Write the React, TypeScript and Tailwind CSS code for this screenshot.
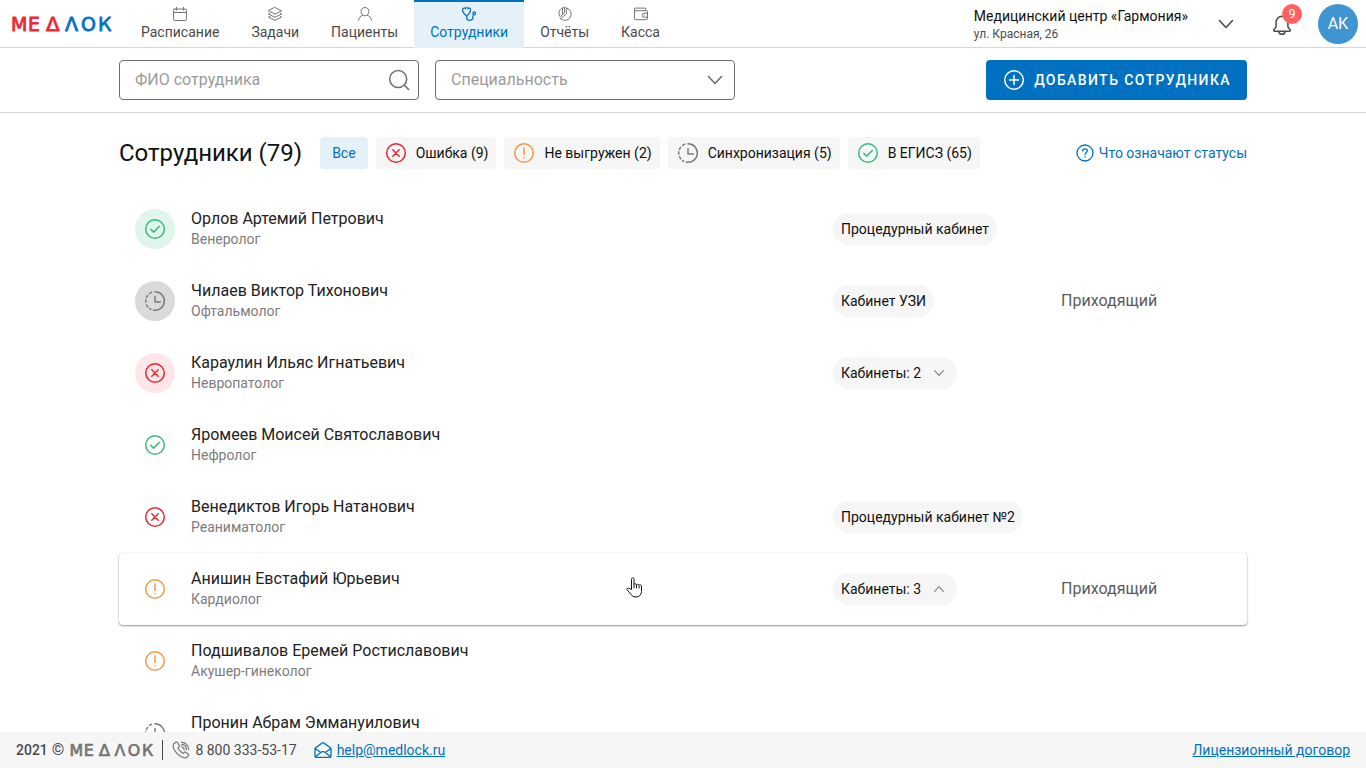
import type { ReactNode } from 'react';

type Status = 'ok' | 'sync' | 'error' | 'warning';

interface Employee {
  name: string;
  specialty: string;
  status: Status;
  filled?: boolean;
  room?: string;
  rooms?: number;
  expanded?: boolean;
  visiting?: boolean;
}

const employees: Employee[] = [
  { name: 'Орлов Артемий Петрович', specialty: 'Венеролог', status: 'ok', filled: true, room: 'Процедурный кабинет' },
  { name: 'Чилаев Виктор Тихонович', specialty: 'Офтальмолог', status: 'sync', filled: true, room: 'Кабинет УЗИ', visiting: true },
  { name: 'Караулин Ильяс Игнатьевич', specialty: 'Невропатолог', status: 'error', filled: true, rooms: 2 },
  { name: 'Яромеев Моисей Святославович', specialty: 'Нефролог', status: 'ok' },
  { name: 'Венедиктов Игорь Натанович', specialty: 'Реаниматолог', status: 'error', room: 'Процедурный кабинет №2' },
  { name: 'Анишин Евстафий Юрьевич', specialty: 'Кардиолог', status: 'warning', rooms: 3, expanded: true, visiting: true },
  { name: 'Подшивалов Еремей Ростиславович', specialty: 'Акушер-гинеколог', status: 'warning' },
  { name: 'Пронин Абрам Эммануилович', specialty: '', status: 'sync' },
];

const filters: { label: string; status: Status }[] = [
  { label: 'Ошибка (9)', status: 'error' },
  { label: 'Не выгружен (2)', status: 'warning' },
  { label: 'Синхронизация (5)', status: 'sync' },
  { label: 'В ЕГИСЗ (65)', status: 'ok' },
];

const statusColor: Record<Status, string> = {
  ok: 'text-[#3dba7e]',
  sync: 'text-[#7c7c7c]',
  error: 'text-[#ee2630]',
  warning: 'text-[#f2994a]',
};

const statusBg: Record<Status, string> = {
  ok: 'bg-[#e0f5ec]',
  sync: 'bg-[#dadada]',
  error: 'bg-[#fde6e8]',
  warning: 'bg-[#fdf0e4]',
};

interface IconProps {
  children: ReactNode;
  size?: string;
  box?: number;
  width?: number;
}

function Icon({ children, size = 'size-4', box = 16, width = 1 }: IconProps) {
  return (
    <svg viewBox={`0 0 ${box} ${box}`} className={`${size} shrink-0`} fill="none" stroke="currentColor" strokeWidth={width} strokeLinecap="round" strokeLinejoin="round" aria-hidden="true">
      {children}
    </svg>
  );
}

function StatusIcon({ status }: { status: Status }) {
  return (
    <span className={`flex ${statusColor[status]}`}>
      <Icon size="size-6" box={24} width={1.5}>
        {status === 'sync' ? (
          <>
            <path d="M12 2.7a9.3 9.3 0 1 1-1.6 18.45" />
            <path d="M8.6 3.3 6.6 4.4M4.6 6.3 3.4 8.4M2.8 10.7v2.6M3.5 15.9l1.3 2M6.6 19.6l1.2.7" />
            <path d="M12 7.4V13h5.4" />
          </>
        ) : (
          <circle cx="12" cy="12" r="9.3" />
        )}
        {status === 'ok' && <path d="m7.8 12.4 2.9 2.7 5.6-5.6" />}
        {status === 'error' && <path d="m8.8 8.8 6.4 6.4M15.2 8.8l-6.4 6.4" />}
        {status === 'warning' && <path d="M12 7v6.4M12 16.4v.3" />}
      </Icon>
    </span>
  );
}

function Chevron({ size, up }: { size: string; up?: boolean }) {
  return (
    <Icon size={size} box={24} width={1.6}>
      <path d={up ? 'm5.500 15.500 6.500-7 6.500 7' : 'm5.500 8.500 6.500 7 6.500-7'} />
    </Icon>
  );
}

function Logo({ className, left, right }: { className: string; left: string; right: string }) {
  return (
    <svg viewBox="0 0 100 24" className={`shrink-0 overflow-visible ${className}`} role="img" aria-label="Медлок" fontFamily="DejaVu Sans, sans-serif" fontSize="19" strokeWidth="0.8" strokeLinejoin="round">
      <g fill={left} stroke={left}>
        <text x="-1" y="19">М</text>
        <text x="16" y="19">Е</text>
        <text x="34" y="19" fontSize="20">Δ</text>
      </g>
      <g fill={right} stroke={right}>
        <text x="53" y="19">Λ</text>
        <text x="69" y="19">О</text>
        <text x="86" y="19">К</text>
      </g>
    </svg>
  );
}

const nav: { label: string; icon: ReactNode; active?: boolean }[] = [
  {
    label: 'Расписание',
    icon: <path d="M2.5 3h11a.9.9 0 0 1 .9.9v9.7a.9.9 0 0 1-.9.9h-11a.9.9 0 0 1-.9-.9V3.900a.9.9 0 0 1 .9-.9ZM1.600 6.500h12.800M4.500 1.300v2.900M11.500 1.300v2.900" />,
  },
  {
    label: 'Задачи',
    icon: <path d="m8 1.500 6.500 3.300L8 8.100 1.500 4.800ZM2.800 7.200l-1.300.8L8 11.300 14.500 8l-1.300-.8M2.800 10.400l-1.300.7L8 14.400l6.500-3.300-1.300-.7" />,
  },
  {
    label: 'Пациенты',
    icon: <path d="M8 1.500c2.300 0 3.900 1.700 3.900 4S10.200 9.800 8 9.800 4.100 7.800 4.100 5.500s1.600-4 3.900-4ZM1.500 14.200c.5-2.600 2-4.300 4.200-5M14.500 14.200c-.5-2.600-2-4.300-4.200-5" />,
  },
  {
    label: 'Сотрудники',
    active: true,
    icon: (
      <g strokeWidth="1.300">
        <path d="M4.400 2.100H3.100c-1 0-1.500.8-1.500 1.700 0 2.800 1.900 4.600 4 6.200 2.100-1.600 4-3.400 4-6.200 0-.9-.5-1.700-1.500-1.700H6.900M4.600 1.500v1.300M6.800 1.500v1.300" />
        <path d="M5.600 10v.9c0 2 1.300 3.400 3.200 3.400s3.100-1.300 3.100-3.200v-.8c0-.9.500-1.200 1.200-1.700" />
        <circle cx="13.200" cy="7.200" r="1.300" />
      </g>
    ),
  },
  {
    label: 'Отчёты',
    icon: (
      <>
        <path d="M9.300 1.800a6.400 6.400 0 1 1-6.400 10.300M9.300 1.800v6.100l-5.600 4.700" />
        <path d="M7.400 1.500v5.300l-4.300 3.900C.4 6.500 2.700 1.800 7.400 1.500ZM5.400 2.400v5.500" />
      </>
    ),
  },
  {
    label: 'Касса',
    icon: (
      <>
        <path d="M12.800 4.700V2.900a.8.800 0 0 0-.8-.8H2.400a.9.900 0 0 0-.9.900v9.800c0 .6.400.9.900.9h11.200c.5 0 .9-.3.9-.9V5.600a.9.900 0 0 0-.9-.9H2.400" />
        <path d="M14.500 7.200h-3.300a2 2 0 0 0 0 4h3.300M11.200 9.200h.2" />
      </>
    ),
  },
];

function Header() {
  return (
    <header className="flex h-12 shrink-0 items-center border-b border-[#d6d6d6] pr-2 pl-3">
      <a href="#" className="mr-[13px] flex">
        <Logo className="h-6 w-[100px]" left="#ee2630" right="#0071c1" />
      </a>
      <nav className="-mb-px flex h-12">
        {nav.map((item) => (
          <a
            key={item.label}
            href="#"
            className={`flex flex-col items-center border-t-2 px-4 pt-1 text-sm ${item.active ? 'border-[#0071c1] bg-[#e4f1f9] text-[#0071c1]' : 'border-transparent text-[#4a4a4a]'}`}
          >
            <span className={item.active ? '' : 'text-[#747474]'}>
              <Icon>{item.icon}</Icon>
            </span>
            {item.label}
          </a>
        ))}
      </nav>
      <button className="ml-auto flex items-center gap-[26px] text-left">
        <span>
          <span className="block text-sm leading-5 text-[#111111]">Медицинский центр «Гармония»</span>
          <span className="block text-xs text-[#4a4a4a]">ул. Красная, 26</span>
        </span>
        <span className="text-[#4a4a4a]">
          <Chevron size="size-6" />
        </span>
      </button>
      <button className="relative mr-6 ml-8 text-[#4a4a4a]" aria-label="Уведомления">
        <Icon size="size-6" box={24} width={1.5}>
          <path d="M12 4.200a5.900 5.900 0 0 0-5.900 5.900v4.300c0 1.500-1.300 2-2.100 3.100-.6.800-.2 1.700.7 1.700h14.600c.9 0 1.300-.9.700-1.700-.8-1.100-2.100-1.600-2.100-3.100v-4.300A5.900 5.900 0 0 0 12 4.200ZM9 19.400c0 1.700 1.300 2.900 3 2.900s3-1.200 3-2.900" />
        </Icon>
        <span className="absolute -top-2 -right-2 flex size-5 items-center justify-center rounded-full bg-[#ff6161] text-xs text-white">9</span>
      </button>
      <button className="flex size-10 items-center justify-center rounded-full bg-[#4094d0] text-base text-white">АК</button>
    </header>
  );
}

function Toolbar() {
  return (
    <div className="shrink-0 border-b border-[#d6d6d6] px-4 py-3">
      <div className="mx-auto flex max-w-[1128px] items-center gap-4">
        <label className="flex h-10 w-[300px] items-center rounded border border-[#6f6f6f] pr-[7px] pl-[15px]">
          <input className="min-w-0 flex-1 bg-transparent text-base outline-none placeholder:text-[#9b9b9b]" placeholder="ФИО сотрудника" aria-label="ФИО сотрудника" />
          <span className="text-[#6f6f6f]">
            <Icon size="size-6" box={24} width={1.5}>
              <circle cx="11.200" cy="11" r="8.500" />
              <path d="m17.300 17.200 4.200 4.200" />
            </Icon>
          </span>
        </label>
        <div className="relative w-[300px]">
          <select defaultValue="" aria-label="Специальность" className="h-10 w-full appearance-none rounded border border-[#6f6f6f] bg-transparent px-[15px] text-base text-[#9b9b9b] outline-none">
            <option value="">Специальность</option>
          </select>
          <span className="pointer-events-none absolute top-2 right-2 text-[#6f6f6f]">
            <Chevron size="size-6" />
          </span>
        </div>
        <button className="ml-auto flex h-10 items-center gap-2 rounded bg-[#0071c1] px-4 text-sm font-medium tracking-widest text-white">
          <Icon size="size-6" box={24} width={1.5}>
            <circle cx="12" cy="12" r="9.300" />
            <path d="M12 7.500v9M7.500 12h9" />
          </Icon>
          ДОБАВИТЬ СОТРУДНИКА
        </button>
      </div>
    </div>
  );
}

function EmployeeRow({ employee }: { employee: Employee }) {
  const { name, specialty, status, filled, room, rooms, expanded, visiting } = employee;
  return (
    <li className={`relative flex h-[72px] items-center rounded px-4 ${expanded ? 'shadow-[0_1px_2px_rgba(0,0,0,0.4),0_0_1px_rgba(0,0,0,0.2)]' : ''}`}>
      <span className={`mr-4 flex size-10 items-center justify-center rounded-full ${filled ? statusBg[status] : ''}`}>
        <StatusIcon status={status} />
      </span>
      <div className="min-w-0 flex-1">
        <div className="text-base leading-5 text-[#222222]">{name}</div>
        <div className="min-h-5 text-sm text-[#7c7c7c]">{specialty}</div>
      </div>
      <div className="flex w-[228px]">
        {room && <span className="flex h-8 items-center rounded-full bg-[#f6f6f6] px-2 text-sm text-[#111111]">{room}</span>}
        {rooms && (
          <button aria-expanded={!!expanded} className="flex h-8 items-center gap-2 rounded-full bg-[#f6f6f6] px-2 text-sm text-[#111111]">
            Кабинеты: {rooms}
            <span className="px-0.5 text-[#7c7c7c]">
              <Chevron size="size-4" up={expanded} />
            </span>
          </button>
        )}
      </div>
      <div className="w-[170px] text-base text-[#5c5c5c]">{visiting && 'Приходящий'}</div>
      {expanded && (
        <svg viewBox="0 0 18 22" className="pointer-events-none absolute top-6 left-[507px] h-[22px] w-[18px]" fill="#ffffff" stroke="#111111" strokeLinejoin="round" aria-hidden="true">
          <path d="M5.500 12.500V2.300c0-1 .5-1.500 1.200-1.500s1.300.5 1.300 1.500v5c.2-.7 2.100-.8 2.500.5.400-.8 2.100-.7 2.500.5.400-.6 2.500-.6 2.500.9v5.200c0 3-2 5.600-5.500 5.600-3 0-4.200-1.400-5.500-3.200L1 12.700c-.8-1.200.8-2.100 2-1.300Z" />
          <path d="M8 7.300v4M10.500 8v3.300M13 8.500v3" />
        </svg>
      )}
    </li>
  );
}

function Footer() {
  return (
    <footer className="flex h-9 shrink-0 items-center bg-[#f6f6f6] px-4 text-sm text-[#4a4a4a]">
      <span className="flex items-center gap-1 font-medium">
        2021 <span className="text-base">©</span>
      </span>
      <Logo className="ml-1.5 h-5 w-[84px]" left="#747474" right="#747474" />
      <span className="mx-2 h-5 w-px bg-[#4a4a4a]" />
      <a href="tel:88003335317" className="mr-4 flex items-center gap-1">
        <span className="text-[#747474]">
          <Icon size="size-5" box={20} width={1.2}>
            <path d="M4.600 2.200 2.900 3.700c-1.700 1.800-.5 5.900 3 9.700 3.600 3.700 7.900 5.400 9.900 3.900l1.500-1.500c.6-.6.500-1.200-.1-1.700l-2.500-1.900c-.6-.4-1.100-.3-1.500.1l-1 1c-1.700-.5-4.600-3.400-5.200-5.400l1.100-1.100c.4-.4.4-.9.100-1.400L6.300 2.300c-.5-.6-1.100-.6-1.700-.1ZM10.500 7c1.500.1 2.500 1.100 2.600 2.600M10.500 4.700c2.900 0 4.800 2 4.900 4.900M10.500 2.400c4.200 0 7.100 3 7.200 7.200" />
          </Icon>
        </span>
        8 800 333-53-17
      </a>
      <a href="mailto:help@medlock.ru" className="flex items-center gap-1 text-[#0071c1] underline">
        <Icon size="size-5" box={20} width={1.3}>
          <path d="M2 8.200v8.100c0 .6.400 1 1 1h14c.6 0 1-.4 1-1V8.200L11 3.100c-.6-.5-1.400-.5-2 0ZM2 8.200l5.600 4.300c1.800-1.300 3-1.300 4.800 0L18 8.200M7.600 12.500 2.300 17M12.400 12.500l5.300 4.500" />
        </Icon>
        help@medlock.ru
      </a>
      <a href="#" className="ml-auto text-[#0071c1] underline">Лицензионный договор</a>
    </footer>
  );
}

export default function App() {
  return (
    <div className="flex h-screen flex-col bg-white font-[Roboto,sans-serif]">
      <Header />
      <Toolbar />
      <main className="min-h-0 flex-1 overflow-y-auto px-4 pt-6 [scrollbar-width:none]">
        <div className="mx-auto max-w-[1128px]">
          <div className="mb-6 flex h-8 items-center gap-2">
            <h1 className="mr-2.5 text-2xl text-[#111111]">Сотрудники (79)</h1>
            <button className="h-8 rounded bg-[#e4f1f9] px-3 text-sm text-[#0071c1]">Все</button>
            {filters.map((filter) => (
              <button key={filter.status} className="flex h-8 items-center gap-2 rounded bg-[#f6f6f6] px-2 text-sm text-[#111111]">
                <StatusIcon status={filter.status} />
                {filter.label}
              </button>
            ))}
            <a href="#" className="ml-auto flex items-center gap-1 text-sm text-[#0071c1]">
              <Icon size="size-5" box={20} width={1.3}>
                <circle cx="10" cy="10" r="8" />
                <path d="M7.700 8.100c0-1.400 1-2.200 2.300-2.200s2.300.8 2.300 2c0 1.500-2.200 1.700-2.200 3.500M10.100 13.600v.3" />
              </Icon>
              Что означают статусы
            </a>
          </div>
          <ul>
            {employees.map((employee) => (
              <EmployeeRow key={employee.name} employee={employee} />
            ))}
          </ul>
        </div>
      </main>
      <Footer />
    </div>
  );
}
